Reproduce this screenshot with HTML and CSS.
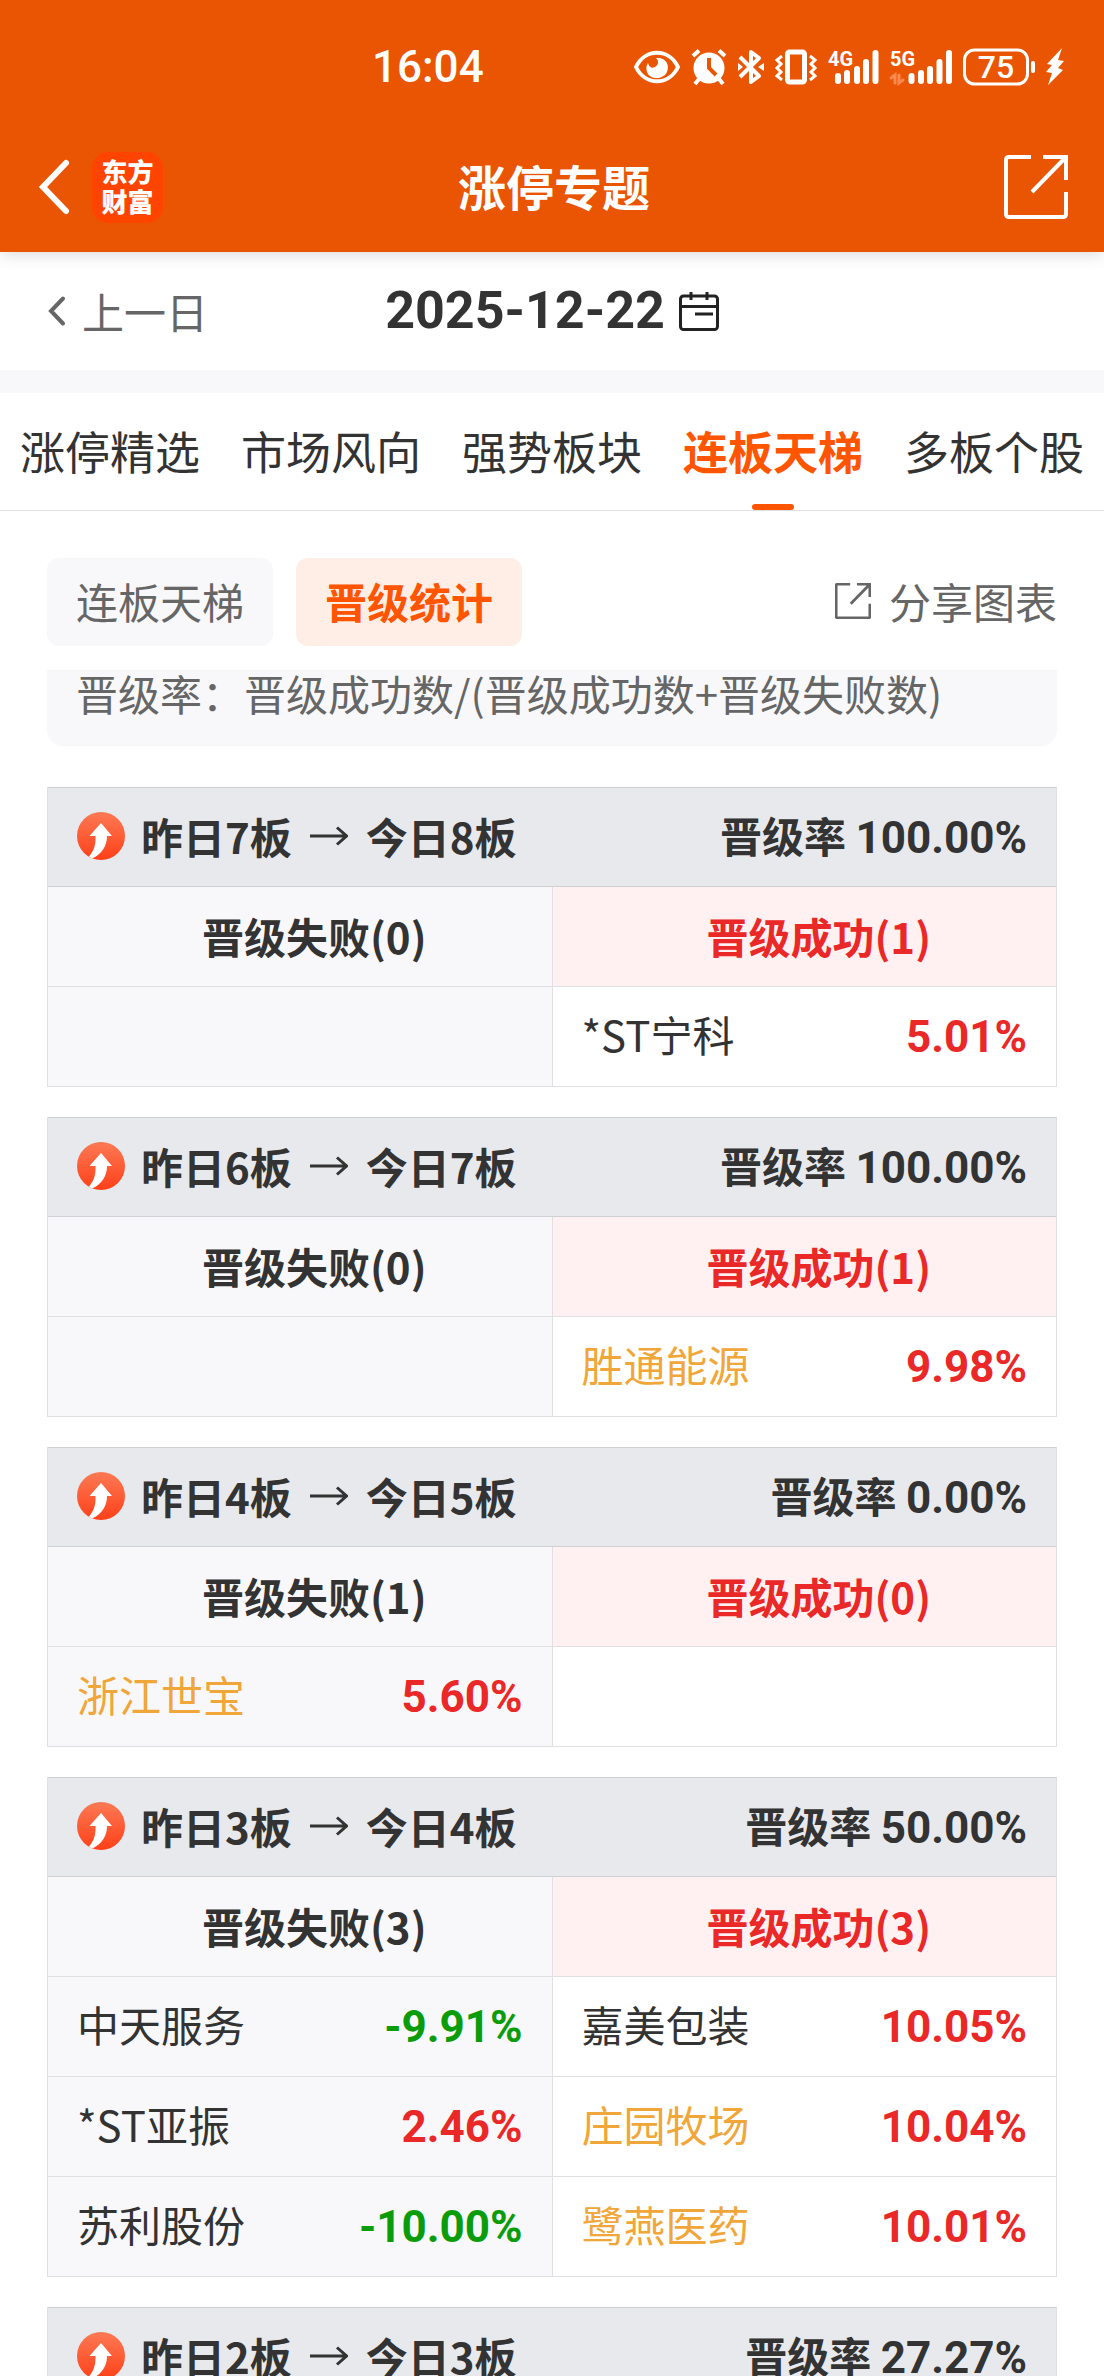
FILE: index.html
```html
<!DOCTYPE html>
<html lang="zh-CN">
<head>
    <meta charset="UTF-8">
    <meta name="viewport" content="width=device-width, initial-scale=1.0">
    <title>涨停专题</title>
    <link rel="stylesheet" href="styles.css">
</head>
<body>

    <!-- iconos compartidos -->
    <svg class="sprite" aria-hidden="true">
        <defs>
            <linearGradient id="upFill" x1="0" y1="0" x2="0" y2="1">
                <stop offset="0" stop-color="#fc7a54"/>
                <stop offset="1" stop-color="#ff4019"/>
            </linearGradient>
        </defs>
        <symbol id="icon-up" viewBox="0 0 48 48">
            <circle cx="24" cy="24" r="24" fill="url(#upFill)"/>
            <path d="M24 11L35 24H30C30 34 25 42 15 46.500L12 44.500C17 39 19 32 18.500 24H12.500Z" fill="#fff"/>
        </symbol>
        <symbol id="icon-arrow" viewBox="0 0 38 20">
            <path d="M0 10H36M27 1.500L36.500 10L27 18.500" fill="none" stroke="#333" stroke-width="3"/>
        </symbol>
        <symbol id="icon-share" viewBox="0 0 64 64">
            <path d="M27 2H5Q2 2 2 5V59Q2 62 5 62H59Q62 62 62 59V37M39 2H62V25M61 3L28 37" fill="none" stroke="currentColor"/>
        </symbol>
    </svg>

    <header class="header">
        <div class="status">
            <span class="status-time">16:04</span>
            <div class="status-icons">
                <svg width="46" height="40" viewBox="0 0 46 40">
                    <path d="M2 20C11 1 35 1 44 20C35 39 11 39 2 20Z" fill="none" stroke="#fff" stroke-width="4"/>
                    <path d="M22 11C32 10 36 18 33 25C29 33 16 33 13 25C12 22 12 19 14 16C15 20 18 22 21 20C25 17 25 14 22 11Z" fill="#fff"/>
                </svg>
                <svg width="36" height="40" viewBox="0 0 36 40">
                    <circle cx="18" cy="21" r="15.500" fill="#fff"/>
                    <path d="M2 9L8 3.500M34 9L28 3.500M8 32L4 37M28 32L32 37" stroke="#fff" stroke-width="4"/>
                    <path d="M18 11V21L25 28" fill="none" stroke="#ea5504" stroke-width="4"/>
                </svg>
                <svg width="26" height="40" viewBox="0 0 26 40">
                    <path d="M2 10L21 29L13 35V5L21 11L2 30" fill="none" stroke="#fff" stroke-width="4" stroke-linejoin="round"/>
                    <path d="M0 16L5 20L0 24ZM26 16L20 20L26 24Z" fill="#fff"/>
                </svg>
                <svg width="42" height="40" viewBox="0 0 42 40">
                    <rect x="12.500" y="5" width="17" height="30" rx="2" fill="none" stroke="#fff" stroke-width="5"/>
                    <path d="M7 9L2 13L6 17L2 21L6 25L2 29L7 33M35 9L40 13L36 17L40 21L36 25L40 29L35 33" fill="none" stroke="#fff" stroke-width="3"/>
                </svg>
                <svg class="signal" width="51" height="40" viewBox="0 0 51 40">
                    <text x="0" y="19">4G</text>
                    <path d="M10 29V34M19 26V34M29 22V34M38 15V34M47.500 6V34"/>
                </svg>
                <svg class="signal" width="62" height="40" viewBox="0 0 62 40">
                    <text x="0" y="19">5G</text>
                    <path d="M21.500 29V34M31 26V34M40 22V34M49.500 15V34M59 6V34"/>
                    <path class="traffic" d="M1 31L5 28V36M9 28V36L13 33"/>
                </svg>
                <svg class="battery" width="72" height="40" viewBox="0 0 72 40">
                    <rect x="1.500" y="3" width="63" height="34" rx="10" fill="none" stroke="#fff" stroke-width="3"/>
                    <path d="M70 16V24" stroke="#fff" stroke-width="4" stroke-linecap="round"/>
                    <text x="33" y="31" text-anchor="middle">75</text>
                </svg>
                <svg width="18" height="40" viewBox="0 0 18 40">
                    <path d="M16 1L1 17L6 18L0 25L6 26L2 38L17 23L12 21L18 14L12 13Z" fill="#fff"/>
                </svg>
            </div>
        </div>

        <div class="navbar">
            <div class="nav-left">
                <button class="icon-button" aria-label="返回">
                    <svg width="29" height="54" viewBox="0 0 29 54"><path d="M26 3L3 27L26 51" fill="none" stroke="#fff" stroke-width="6" stroke-linecap="round"/></svg>
                </button>
                <a href="#" class="logo">东方<br>财富</a>
            </div>
            <h1 class="title">涨停专题</h1>
            <button class="icon-button nav-share" aria-label="分享">
                <svg width="64" height="64"><use href="#icon-share"/></svg>
            </button>
        </div>
    </header>

    <div class="date-bar">
        <button class="prev-day">
            <svg width="18" height="30" viewBox="0 0 18 30"><path d="M15 2.500L3 15L15 27.500" fill="none" stroke="#666" stroke-width="4" stroke-linecap="round"/></svg>
            上一日
        </button>
        <button class="date">
            2025-12-22
            <svg width="40" height="40" viewBox="0 0 40 40" fill="none" stroke="#222" stroke-width="3">
                <rect x="1.500" y="5" width="37" height="33.500" rx="3"/>
                <path d="M2 15.500H38M12 1V9M28 1V9M16 23H34"/>
            </svg>
        </button>
    </div>

    <nav class="tabs">
        <a href="#" class="tab">涨停精选</a>
        <a href="#" class="tab">市场风向</a>
        <a href="#" class="tab">强势板块</a>
        <a href="#" class="tab active">连板天梯</a>
        <a href="#" class="tab">多板个股</a>
    </nav>

    <div class="toolbar">
        <button class="chip">连板天梯</button>
        <button class="chip active">晋级统计</button>
        <button class="share-chart">
            <svg width="36" height="36"><use href="#icon-share"/></svg>
            分享图表
        </button>
    </div>

    <main class="content">
        <p class="note">晋级率：晋级成功数/(晋级成功数+晋级失败数)</p>

        <table class="ladder">
            <thead>
                <tr class="ladder-head">
                    <th colspan="2"><div class="row">
                        <span class="step"><svg class="up"><use href="#icon-up"/></svg>昨日7板<svg class="arrow"><use href="#icon-arrow"/></svg>今日8板</span>
                        <span>晋级率 <b>100.00%</b></span>
                    </div></th>
                </tr>
                <tr><th class="fail">晋级失败(0)</th><th class="success">晋级成功(1)</th></tr>
            </thead>
            <tbody>
                <tr>
                    <td></td>
                    <td><div class="row"><span>*ST宁科</span><b class="rise">5.01%</b></div></td>
                </tr>
            </tbody>
        </table>

        <table class="ladder">
            <thead>
                <tr class="ladder-head">
                    <th colspan="2"><div class="row">
                        <span class="step"><svg class="up"><use href="#icon-up"/></svg>昨日6板<svg class="arrow"><use href="#icon-arrow"/></svg>今日7板</span>
                        <span>晋级率 <b>100.00%</b></span>
                    </div></th>
                </tr>
                <tr><th class="fail">晋级失败(0)</th><th class="success">晋级成功(1)</th></tr>
            </thead>
            <tbody>
                <tr>
                    <td></td>
                    <td><div class="row"><span class="hot">胜通能源</span><b class="rise">9.98%</b></div></td>
                </tr>
            </tbody>
        </table>

        <table class="ladder">
            <thead>
                <tr class="ladder-head">
                    <th colspan="2"><div class="row">
                        <span class="step"><svg class="up"><use href="#icon-up"/></svg>昨日4板<svg class="arrow"><use href="#icon-arrow"/></svg>今日5板</span>
                        <span>晋级率 <b>0.00%</b></span>
                    </div></th>
                </tr>
                <tr><th class="fail">晋级失败(1)</th><th class="success">晋级成功(0)</th></tr>
            </thead>
            <tbody>
                <tr>
                    <td><div class="row"><span class="hot">浙江世宝</span><b class="rise">5.60%</b></div></td>
                    <td></td>
                </tr>
            </tbody>
        </table>

        <table class="ladder">
            <thead>
                <tr class="ladder-head">
                    <th colspan="2"><div class="row">
                        <span class="step"><svg class="up"><use href="#icon-up"/></svg>昨日3板<svg class="arrow"><use href="#icon-arrow"/></svg>今日4板</span>
                        <span>晋级率 <b>50.00%</b></span>
                    </div></th>
                </tr>
                <tr><th class="fail">晋级失败(3)</th><th class="success">晋级成功(3)</th></tr>
            </thead>
            <tbody>
                <tr>
                    <td><div class="row"><span>中天服务</span><b class="drop">-9.91%</b></div></td>
                    <td><div class="row"><span>嘉美包装</span><b class="rise">10.05%</b></div></td>
                </tr>
                <tr>
                    <td><div class="row"><span>*ST亚振</span><b class="rise">2.46%</b></div></td>
                    <td><div class="row"><span class="hot">庄园牧场</span><b class="rise">10.04%</b></div></td>
                </tr>
                <tr>
                    <td><div class="row"><span>苏利股份</span><b class="drop">-10.00%</b></div></td>
                    <td><div class="row"><span class="hot">鹭燕医药</span><b class="rise">10.01%</b></div></td>
                </tr>
            </tbody>
        </table>

        <table class="ladder">
            <thead>
                <tr class="ladder-head">
                    <th colspan="2"><div class="row">
                        <span class="step"><svg class="up"><use href="#icon-up"/></svg>昨日2板<svg class="arrow"><use href="#icon-arrow"/></svg>今日3板</span>
                        <span>晋级率 <b>27.27%</b></span>
                    </div></th>
                </tr>
            </thead>
        </table>
    </main>

</body>
</html>
```
FILE: styles.css
```css
* {
  box-sizing: border-box;
}
body {
  margin: 0;
  height: 100vh;
  display: flex;
  flex-direction: column;
  overflow: hidden;
  background: #fff;
  color: #333;
  font-family: "Noto Sans CJK SC", sans-serif;
  font-size: 42px;
  line-height: 48px;
}
button {
  display: flex;
  align-items: center;
  padding: 0;
  border: none;
  background: none;
  color: inherit;
  font: inherit;
  cursor: pointer;
}
a {
  color: inherit;
  text-decoration: none;
}
svg {
  display: block;
  flex: none;
  overflow: visible;
}
.sprite {
  position: absolute;
  width: 0;
  height: 0;
}

/* cabecera */
.header {
  flex: none;
  background: #ea5504;
  color: #fff;
  box-shadow: 0 2px 16px rgba(0, 0, 0, 0.15);
  z-index: 1;
}
.status {
  display: flex;
  align-items: center;
  justify-content: space-between;
  height: 122px;
  padding: 12px 40px 0 372px;
}
.status-time {
  font-family: Roboto, sans-serif;
  font-size: 44px;
  font-weight: 500;
}
.status-icons {
  display: flex;
  align-items: center;
  gap: 11px;
}
.status-icons text {
  fill: #fff;
  font-family: Roboto, sans-serif;
}
.signal text {
  font-size: 20px;
  font-weight: 700;
}
.signal path {
  fill: none;
  stroke: #fff;
  stroke-width: 6px;
  stroke-linecap: round;
}
.signal .traffic {
  stroke: #ff8a50;
  stroke-width: 3px;
}
.battery text {
  font-size: 32px;
  font-weight: 500;
}
.navbar {
  display: grid;
  grid-template-columns: 1fr auto 1fr;
  align-items: center;
  height: 130px;
  padding: 0 36px 0 40px;
}
.nav-left {
  display: flex;
  align-items: center;
  gap: 23px;
}
.logo {
  width: 71px;
  height: 71px;
  padding-top: 4px;
  border-radius: 16px;
  background: #ff4400;
  font-size: 26px;
  font-weight: 900;
  line-height: 30px;
  text-align: center;
}
.title {
  margin: 0;
  padding-bottom: 4px;
  font-size: 48px;
  font-weight: 700;
}
.nav-share {
  justify-self: end;
  stroke-width: 4px;
}

/* fecha */
.date-bar {
  flex: none;
  display: grid;
  grid-template-columns: 1fr auto 1fr;
  align-items: center;
  height: 118px;
  padding: 0 48px;
}
.prev-day {
  gap: 16px;
  color: #666;
}
.date {
  gap: 14px;
  font-family: Roboto, sans-serif;
  font-size: 52px;
  font-weight: 700;
}

/* pestañas */
.tabs {
  flex: none;
  display: flex;
  justify-content: space-between;
  padding: 0 20px;
  border-top: 23px solid #f8f8fb;
  border-bottom: 1px solid #e0e0e0;
}
.tab {
  position: relative;
  padding-bottom: 2px;
  font-size: 45px;
  line-height: 115px;
}
.tab.active {
  color: #ff5500;
  font-weight: 700;
}
.tab.active::after {
  content: "";
  position: absolute;
  left: 50%;
  bottom: 0;
  width: 42px;
  height: 6px;
  margin-left: -21px;
  border-radius: 3px;
  background: #ff5500;
}

/* botones */
.toolbar {
  flex: none;
  display: flex;
  gap: 23px;
  padding: 47px 47px 24px;
  color: #666;
}
.chip {
  height: 88px;
  padding: 0 29px 2px;
  border-radius: 12px;
  background: #f8f8fb;
}
.chip.active {
  background: #ffeee6;
  color: #ff5500;
  font-weight: 700;
}
.share-chart {
  gap: 18px;
  margin-left: auto;
  padding-bottom: 2px;
  stroke-width: 5px;
}

/* contenido */
.content {
  flex: 1;
  min-height: 0;
  padding: 0 47px;
  overflow-y: auto;
  scrollbar-width: none;
}
.note {
  margin: 0 0 41px;
  padding: 0 29px 30px;
  border-radius: 0 0 16px 16px;
  background: #f8f8fb;
  color: #666;
  line-height: 46px;
}
.ladder {
  width: 100%;
  margin-bottom: 30px;
  border-collapse: separate;
  border-spacing: 0;
  border-left: 1px solid #e0e0e3;
  table-layout: fixed;
}
.ladder th,
.ladder td {
  height: 100px;
  padding: 0 29px 2px;
  border-right: 1px solid #e0e0e3;
  border-bottom: 1px solid #e0e0e3;
}
.ladder td:first-child,
.ladder .fail {
  background: #f8f8fb;
}
.ladder .fail,
.ladder .success {
  padding-left: 58px;
}
.ladder .success {
  background: #fff1f1;
  color: #ea2828;
}
.ladder .ladder-head th {
  border-top: 1px solid #cfd0d4;
  border-bottom-color: #cfd0d4;
  background: #e8e9ed;
}
.ladder b {
  font-family: Roboto, sans-serif;
  font-size: 44px;
  font-weight: 700;
}
.row {
  display: flex;
  align-items: baseline;
  justify-content: space-between;
}
.ladder-head .row {
  align-items: center;
}
.step {
  display: flex;
  align-items: center;
}
.up {
  width: 48px;
  height: 48px;
  margin-right: 16px;
}
.arrow {
  width: 38px;
  height: 20px;
  margin: 0 18px;
}
.hot {
  color: #f0a638;
}
.rise {
  color: #ea2828;
}
.drop {
  color: #0a9c0a;
}
```
